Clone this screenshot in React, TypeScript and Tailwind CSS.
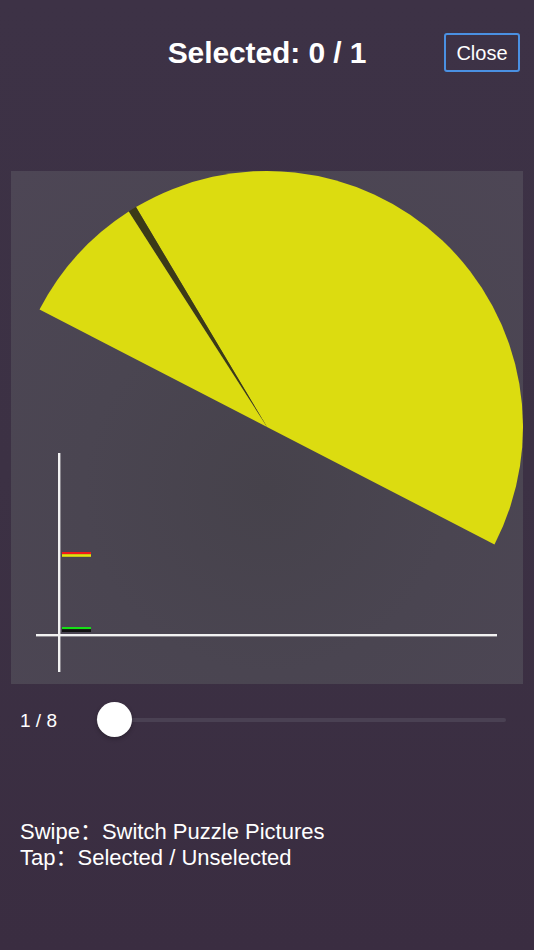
import React from "react";

function PuzzleCanvas() {
  return (
    <div className="w-[512px] h-[513px] bg-[radial-gradient(circle_at_50%_62%,#46424b_0%,#4a4551_45%,#4d4655_100%)]">
      <svg width="512" height="513" viewBox="0 0 512 513" className="block">
        <path d="M256,256 L483.49,373.41 A256,256 0 0 0 124.95,36.09 Z" fill="#dcdc10" />
        <path d="M256,256 L124.95,36.09 A256,256 0 0 0 117.7,40.57 Z" fill="#3b3a17" />
        <path d="M256,256 L117.7,40.57 A256,256 0 0 0 28.51,138.59 Z" fill="#dcdc10" />
        <rect x="47" y="282" width="2.4" height="219" fill="#f2f2f2" />
        <rect x="25" y="463" width="461" height="2.4" fill="#f2f2f2" />
        <rect x="51" y="381" width="29" height="2.2" fill="#f01a1a" />
        <rect x="51" y="383.2" width="29" height="2.6" fill="#e3e30c" />
        <rect x="51" y="456" width="29" height="2.2" fill="#16e016" />
        <rect x="51" y="458.2" width="29" height="2.8" fill="#111111" />
      </svg>
    </div>
  );
}

export default function App() {
  return (
    <div
      className="w-full h-[950px] bg-[linear-gradient(180deg,#3d3246_0%,#3c3144_50%,#3a2d41_100%)] text-white overflow-hidden"
      style={{ fontFamily: '"Liberation Sans", "Noto Sans CJK SC", sans-serif' }}
    >
      <div className="relative flex items-center justify-center pt-[33px] h-[72px]">
        <h1 className="text-[30px] font-bold leading-[39px] tracking-[-0.1px]">Selected: 0 / 1</h1>
        <button className="absolute right-[14px] top-[33px] w-[76px] h-[39px] border-2 border-[#4a90e2] rounded-[3px] text-[20px] leading-none text-white flex items-center justify-center">
          Close
        </button>
      </div>

      <div className="mt-[99px] pl-[11px]">
        <PuzzleCanvas />
      </div>

      <div className="mt-[18px] h-[35px] flex items-center pl-[20px] pr-[28px]">
        <span className="text-[19px] w-[76px] shrink-0 pt-[3px]">1 / 8</span>
        <div className="relative flex-1 h-[35px] flex items-center">
          <div className="w-full h-[4px] rounded-full bg-[#4a4153]" />
          <div className="absolute left-[1px] top-0 w-[35px] h-[35px] rounded-full bg-white shadow-[0_2px_4px_rgba(0,0,0,0.25)]" />
        </div>
      </div>

      <div className="mt-[82px] pl-[20px] text-[22px] leading-[26px]">
        <div>Swipe：Switch Puzzle Pictures</div>
        <div>Tap：Selected / Unselected</div>
      </div>
    </div>
  );
}
